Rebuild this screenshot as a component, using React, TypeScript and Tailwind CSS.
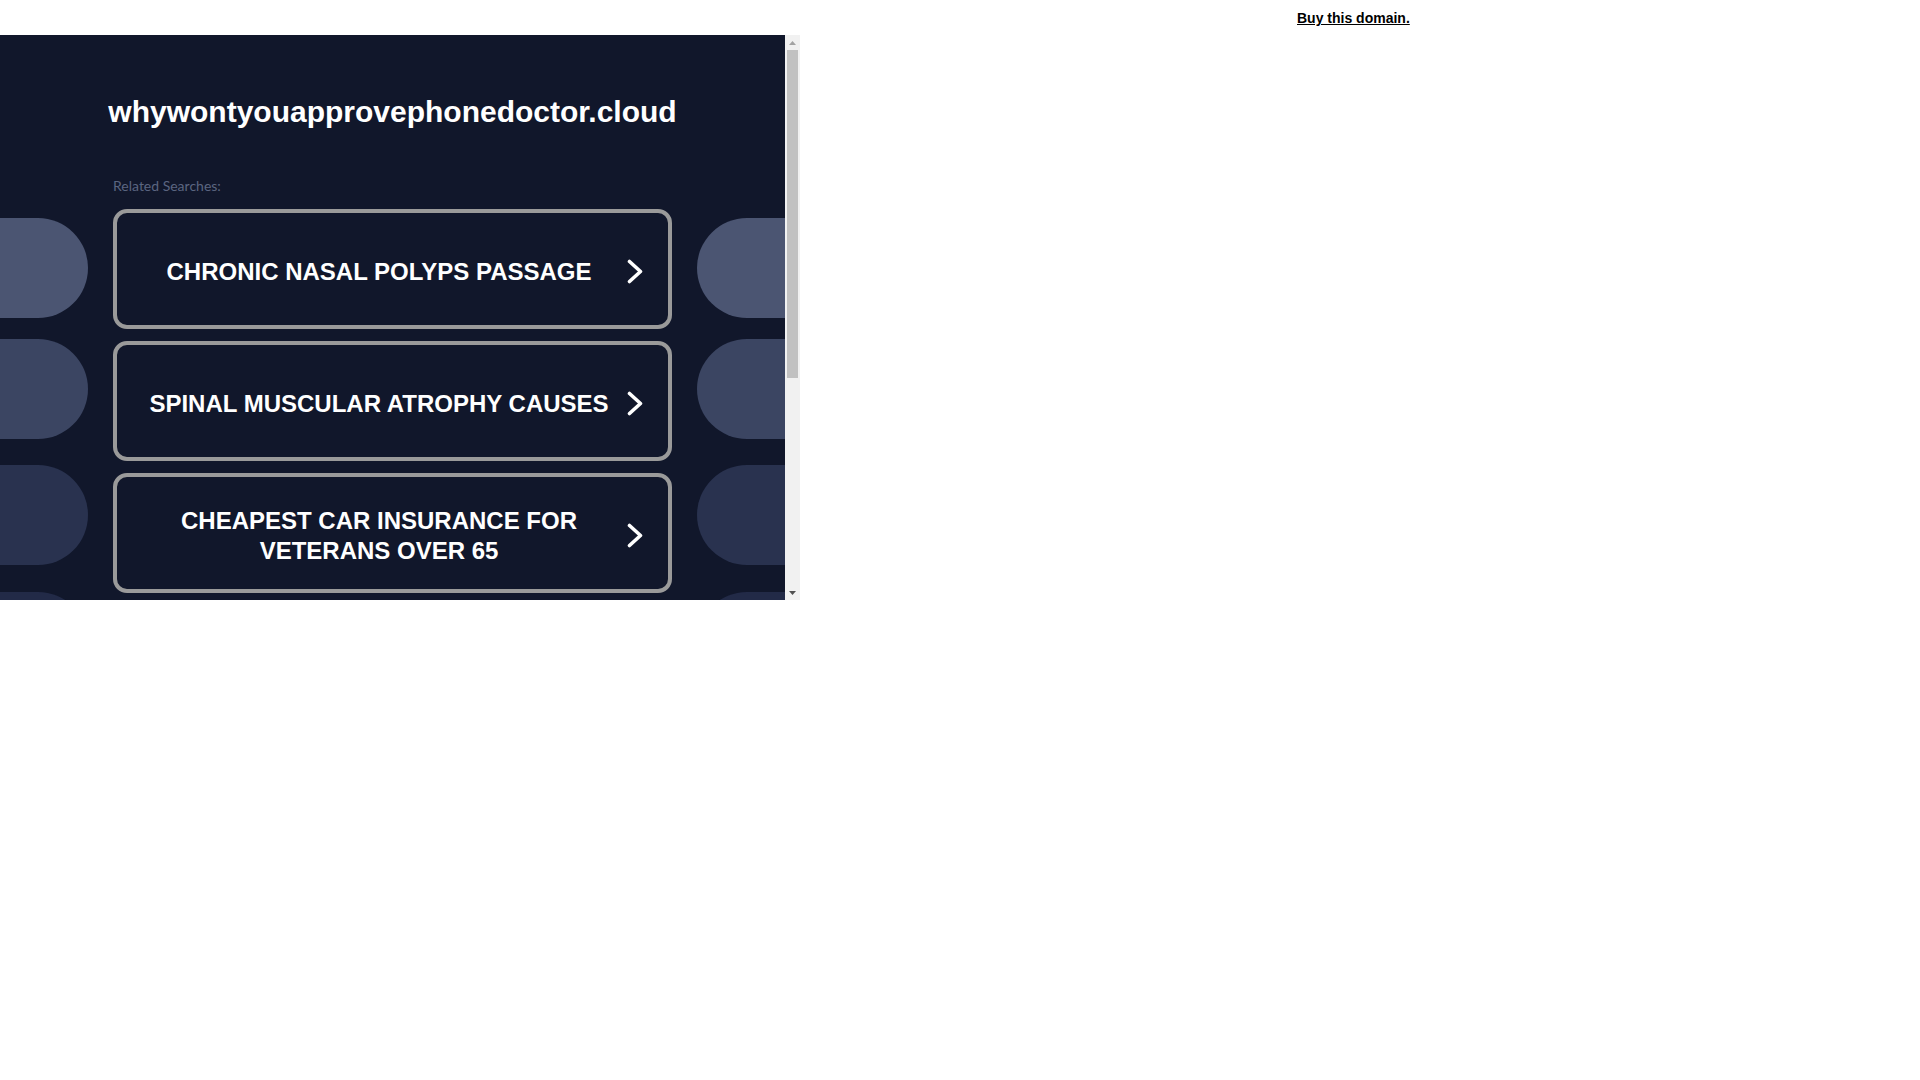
const searches = [
  'CHRONIC NASAL POLYPS PASSAGE',
  'SPINAL MUSCULAR ATROPHY CAUSES',
  'CHEAPEST CAR INSURANCE FOR VETERANS OVER 65',
];

function Chevron() {
  return (
    <svg width="16" height="25" viewBox="0 0 16 25" fill="none" className="shrink-0">
      <path d="M2.5 2.5 L13.5 12.5 L2.5 22.5" stroke="#ffffff" strokeWidth="3.6" strokeLinecap="round" strokeLinejoin="round" />
    </svg>
  );
}

function SideBlobs({ side }: { side: 'left' | 'right' }) {
  const round = side === 'left' ? 'rounded-r-[50px]' : 'rounded-l-[50px]';
  return (
    <div className="flex w-[88px] shrink-0 flex-col pt-[9px]">
      <div className={`h-[100px] bg-[#4b5572] ${round}`} />
      <div className={`mt-[21px] h-[100px] bg-[#3b4562] ${round}`} />
      <div className={`mt-[26px] h-[100px] bg-[#29324f] ${round}`} />
      <div className={`mt-[27px] h-[100px] bg-[#222a47] ${round}`} />
    </div>
  );
}

function SearchCard({ label }: { label: string }) {
  return (
    <a
      href="#"
      className="flex h-[120px] items-center gap-[16px] rounded-[14px] border-4 border-[#9a9a9a] bg-[#11172b] pl-[30px] pr-[25px] pt-[5px]"
    >
      <span className="flex-1 text-center text-[24px] font-bold leading-[29.5px] text-white">{label}</span>
      <Chevron />
    </a>
  );
}

function Scrollbar() {
  return (
    <div className="flex h-[565px] w-[15px] shrink-0 flex-col bg-[#f1f1f1]">
      <div className="flex h-[15px] items-center justify-center">
        <svg width="7" height="4" viewBox="0 0 7 4">
          <path d="M0 4 L3.5 0 L7 4 Z" fill="#a3a3a3" />
        </svg>
      </div>
      <div className="flex-1 px-[2px]">
        <div className="h-[328px] bg-[#c1c1c1]" />
      </div>
      <div className="flex h-[15px] items-center justify-center">
        <svg width="7" height="4" viewBox="0 0 7 4">
          <path d="M0 0 L7 0 L3.5 4 Z" fill="#505050" />
        </svg>
      </div>
    </div>
  );
}

export default function App() {
  return (
    <div className="min-h-screen bg-white font-['Liberation_Sans',Arial,sans-serif]">
      <div className="h-[35px] pl-[1297px] pt-[10px] text-[14px] leading-[16px]">
        <a href="#" className="font-bold text-black underline">
          Buy this domain.
        </a>
      </div>

      <div className="flex w-[800px]">
        <div className="h-[565px] w-[785px] overflow-hidden bg-[#11172b]">
          <div className="flex min-h-[921px] flex-col pt-[59px]">
            <h1 className="text-center text-[30px] font-bold leading-[36px] text-white">
              whywontyouapprovephonedoctor.cloud
            </h1>

            <div className="flex gap-[25px]">
              <div className="w-[88px]" />
              <p className="mt-[48px] font-['Lato',sans-serif] text-[14px] leading-[16px] text-[#5b6580]">
                Related Searches:
              </p>
            </div>

            <div className="mt-[15px] flex gap-[25px]">
              <SideBlobs side="left" />
              <div className="flex w-[559px] shrink-0 flex-col gap-[12px]">
                {searches.map((s) => (
                  <SearchCard key={s} label={s} />
                ))}
              </div>
              <SideBlobs side="right" />
            </div>
          </div>
        </div>
        <Scrollbar />
      </div>
    </div>
  );
}
